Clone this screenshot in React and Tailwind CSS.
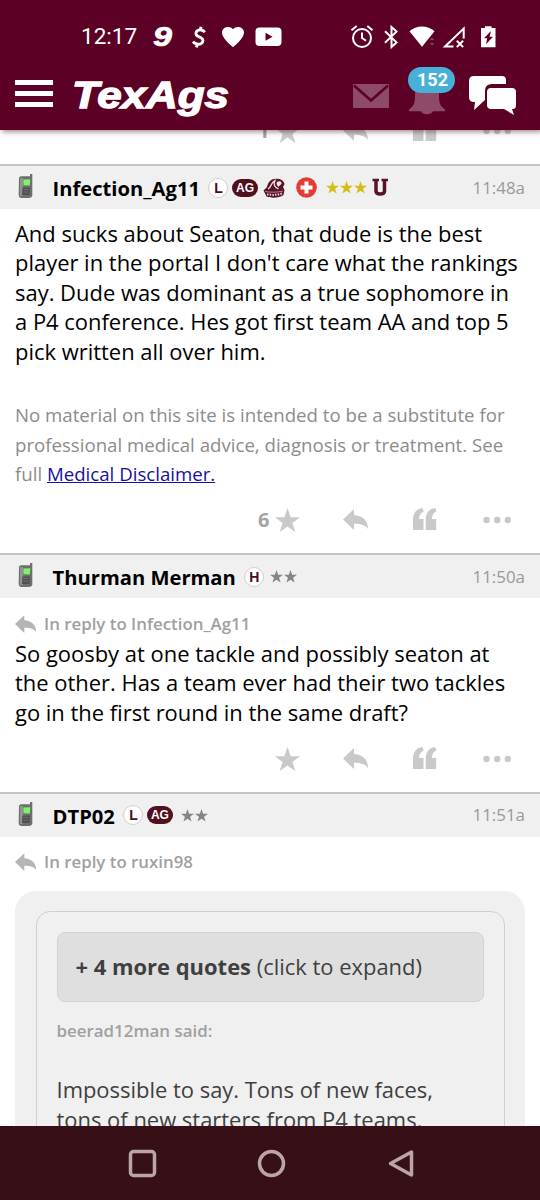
import React from "react";

function StatusBar() {
  return (
    <div className="flex h-[72px] items-center pt-[1px] text-white">
      <span className="ml-[81px] w-[72px] font-['Roboto',sans-serif] text-[22.5px] leading-none">12:17</span>
      <svg className="w-[21px] shrink-0" height="28" viewBox="0 0 21 28">
        <text x="0" y="23" textLength="19" lengthAdjust="spacingAndGlyphs" fontFamily="Liberation Sans, sans-serif" fontSize="27" fontWeight="700" fontStyle="italic" fill="#fff" stroke="#fff" strokeWidth=".7">9</text>
      </svg>
      <svg className="ml-[17px] w-[17px] shrink-0" height="24" viewBox="0 0 17 24" fill="none" stroke="#fff" strokeWidth="2.9">
        <path d="M13.7 7.2C12.2 4.9 8.8 4.2 6.6 5.5S4.4 9.9 6.5 11l3.5 1.7c2.6 1.3 2.5 4.5.2 5.800-2.700 1.500-6.600.4-8.200-1.900M10 1.700 9.400 5M6.200 19l-.7 3.400" />
      </svg>
      <svg className="ml-[13px] w-[24px] shrink-0" height="22" viewBox="0 0 24 22"><path fill="#fff" d="M12 21.3C8 17.8 1 11.6 1 6.5 1 .8 8.8-1 12 3.2 15.2-1 23 .8 23 6.5c0 5.1-7 11.3-11 14.8Z" /></svg>
      <svg className="ml-[10px] w-[27px] shrink-0" height="20" viewBox="0 0 27 20"><rect x=".5" y=".5" width="26" height="18.5" rx="4" fill="#fff" /><path d="M10.5 5.8v8l7-4z" fill="#5c0025" /></svg>
      <svg className="ml-[68px] w-[24px] shrink-0" height="26" viewBox="0 0 24 26" fill="none" stroke="#fff" strokeWidth="2"><circle cx="12" cy="14" r="9" /><path d="M12 8.5V14l4 2.8M1.5 6.2l5.2-4.3M17.3 1.9l5.2 4.3" /></svg>
      <svg className="ml-[10px] w-[15px] shrink-0" height="24" viewBox="0 0 15 24" fill="none" stroke="#fff" strokeWidth="2"><path d="m1 6.2 11.5 11.2-5 4.6V2l5 4.6L1 17.8" /></svg>
      <svg className="ml-[10px] w-[27px] shrink-0" height="24" viewBox="0 0 27 24"><path fill="#fff" d="M.5 6.2C7.2-.2 18.8-.2 25.5 6.2L13 21.7Z" /><path fill="#8e4b69" d="m23 12.5 2 2.500h-4zm0 8-2-2.500h4z" /></svg>
      <svg className="ml-[6px] w-[24px] shrink-0" height="24" viewBox="0 0 24 24" fill="none" stroke="#fff" strokeWidth="2"><path d="M11.5 21.600H3L21.7 3.500v10M14.8 15.800l6.3 6.3m0-6.3-6.3 6.3" /></svg>
      <svg className="ml-[14px] w-[17px] shrink-0" height="24" viewBox="0 0 17 24"><path fill="#fff" d="M5 3V1.2h6.5V3h4v19.3H1V3Z" /><path fill="#5c0025" d="M11 6 4 13.2h3.2L6 19.2l7-7.4H9.6z" /></svg>
    </div>
  );
}

function TopBar() {
  return (
    <header className="relative z-10 h-[130px] shrink-0 bg-[#5c0025] shadow-[2px_2px_5px_rgba(60,0,25,0.45)]">
      <StatusBar />
      <div className="flex h-[46px] items-center">
        <div className="ml-[15px] flex w-[38px] flex-col gap-[5.5px] pb-[3px]">
          <i className="h-[5.5px] bg-white" /><i className="h-[5.5px] bg-white" /><i className="h-[5.5px] bg-white" />
        </div>
        <svg className="ml-[18px] shrink-0" width="164" height="46" viewBox="0 0 164 46">
          <text x="1" y="35.500" textLength="157" lengthAdjust="spacingAndGlyphs" fontFamily="Liberation Sans, sans-serif" fontSize="36.5" fontWeight="700" fontStyle="italic" fill="#fff" stroke="#fff" strokeWidth="1.3">TexAgs</text>
        </svg>
        <svg className="ml-[118px] mt-[2px] shrink-0" width="36" height="24" viewBox="0 0 36 24"><rect width="36" height="24" rx="1" fill="#8e4b69" /><path d="M1 1.5 18 16.5 35 1.5" fill="none" stroke="#5c0025" strokeWidth="2.7" /></svg>
        <div className="relative ml-[20px] h-[46px] w-[36px] shrink-0">
          <svg width="36" height="46" viewBox="0 0 36 46"><path fill="#8e4b69" d="M18 9c8 0 12 6 12 14 0 9 1 10.5 6 14.5v1.8H24c-1.5 4-10.500 4-12 0H0v-1.800C5 33.500 6 32 6 23 6 15 10 9 18 9Z" /></svg>
          <span className="absolute left-[-1px] top-[-5px] flex h-[26px] w-[47px] items-center justify-center rounded-full bg-[#47b0d7] pb-[1px] pl-[2px] font-['Roboto',sans-serif] text-[18px] font-bold text-white">152</span>
        </div>
        <svg className="ml-[23px] shrink-0" width="50" height="42" viewBox="0 0 50 42"><path fill="#fff" d="M6 2h28q4 0 4 4v4H24q-7 0-7 7v9l-11 10 1-8H6q-5 0-5-5V7q0-5 5-5Z" /><path fill="#fff" d="M23 14h21q4 0 4 4v13q0 4-3 4h-1l2 6-10-6H23q-4 0-4-4V18q0-4 4-4Z" /></svg>
      </div>
    </header>
  );
}

function ReplyIcon({ small }) {
  return (
    <svg className="shrink-0" width={small ? 22 : 26} height={small ? 19 : 22} viewBox="0 0 26 22" fill={small ? "#b5b5b5" : "#c9c9c9"}>
      <path d="M0 10.500 11 0v6C19 6.500 25 11 25 20c-3-4-7-5.300-14-5.200V21Z" />
    </svg>
  );
}

function Star({ size, fill }) {
  return <svg className="shrink-0" width={size} height={size} viewBox="0 0 24 24" fill={fill}><path d="M12 0l3 8.800h9l-7.300 5.500L19.500 23 12 17.800 4.500 23l2.800-8.700L0 8.800h9z" /></svg>;
}

function Actions({ count, className = "" }) {
  return (
    <div className={"flex h-[60px] shrink-0 items-center " + className}>
      <span className="w-[269.5px] text-right text-[20px] font-bold text-[#a3a3a3]">{count}</span>
      <span className="ml-[5.5px] w-[68px]"><Star size={25} fill="#c9c9c9" /></span>
      <span className="w-[70px]"><ReplyIcon /></span>
      <svg className="-mt-[2px] shrink-0" width="24" height="24" viewBox="0 0 24 24" fill="#c9c9c9"><path d="M0 23V13C0 6 3 2 9.500 1l1.200 3.500C7.500 6 6.200 8.500 6.200 12h4.300v11zM12.700 23V13c0-7 3-11 9.500-12l1.200 3.500C20.200 6 18.900 8.500 18.900 12h4.300v11z" /></svg>
      <svg className="ml-[46px] shrink-0" width="30" height="8" viewBox="0 0 30 8" fill="#c9c9c9"><circle cx="3.500" cy="4" r="3.200" /><circle cx="14.200" cy="4" r="3.200" /><circle cx="24.800" cy="4" r="3.200" /></svg>
    </div>
  );
}

function Phone() {
  return (
    <svg className="-mt-[2px] ml-[18px] shrink-0" width="16" height="25" viewBox="0 0 16 25">
      <path d="M12 0h2.300v22q-1 2-3.300 2H3q-2.500-.5-2.300-3L1 4q.3-1.700 2-1.800h9z" fill="#6e6e6e" />
      <path d="M2 4h3v18H2z" fill="#929292" />
      <path d="m5.300 5.500 7-.3-.5 6.300-6.300-.3z" fill="#7df568" />
      <path d="M4.500 13.500h7.500l-.5 7.500H4z" fill="#505050" />
      <path d="M5.500 15.500h5m-5 2.500h5" stroke="#6f6f6f" />
    </svg>
  );
}

function Letter({ children }) {
  return <span className="flex size-[20px] shrink-0 items-center justify-center rounded-full border border-[#cfcfcf] bg-white font-['Liberation_Sans',sans-serif] text-[14px] font-bold leading-none text-[#4d0c1c]">{children}</span>;
}

function Aggie() {
  return <span className="ml-[3.5px] flex h-[18px] w-[26px] shrink-0 items-center justify-center rounded-full bg-[#520f20] font-['Liberation_Sans',sans-serif] text-[12px] font-bold leading-none text-white">AG</span>;
}

function Ring() {
  return (
    <svg className="ml-[5.5px] shrink-0" width="22" height="20" viewBox="0 0 22 20">
      <path d="M.5 12.500 4 9C5 4 8 .8 13 .8c5 0 8 2 8.500 5.500L20 9l1.500 3-1 5c-4 3-12 3.500-17 1.500Z" fill="#5a1225" />
      <path d="M5 11C9 9 7 5 12 2.500c-2 4-.5 6.500 3.500 8.500" fill="none" stroke="#f1e8eb" strokeWidth="1.300" />
      <path d="M14 4c2-1.500 5-.5 4.500 1.500C18 7.500 16 7 15.500 9 14 7.500 13 5.500 14 4Z" fill="#f1e8eb" />
      <path d="M2 13.500c6 1 12 1 18-.5" fill="none" stroke="#e3d3d8" strokeWidth=".6" />
      <path d="M4 16.300c5 1 10 .8 15-.8" fill="none" stroke="#e3d3d8" strokeWidth="2" strokeDasharray="1.500 1.200" />
    </svg>
  );
}

function Stars({ count, fill, className }) {
  return <span className={"flex shrink-0 gap-[1px] " + className}>{Array.from({ length: count }, (_, i) => <Star key={i} size={13} fill={fill} />)}</span>;
}

function PostHeader({ name, time, children }) {
  return (
    <div className="flex h-[45px] shrink-0 items-center border-t-2 border-[#c3c3c3] bg-[#f0f0f0]">
      <Phone />
      <strong className="ml-[18.500px] shrink-0 whitespace-nowrap pt-[2px] text-[20.200px] font-bold leading-none text-black">{name}</strong>
      {children}
      <time className="ml-auto mr-[15px] text-[16.900px] text-[#999]">{time}</time>
    </div>
  );
}

function ReplyTo({ children }) {
  return <div className="flex items-center gap-[7px] pl-[15px] text-[16.850px] font-semibold leading-[20px] text-[#a0a0a0]"><ReplyIcon small />{children}</div>;
}

function Lines({ lines, className = "" }) {
  return <div className={"whitespace-nowrap leading-[29.600px] " + className}>{lines.map((line, i) => <div key={i}>{line}</div>)}</div>;
}

function NavBar() {
  return (
    <nav className="z-10 flex h-[74px] shrink-0 items-center bg-[#360f17]">
      <svg className="ml-[128px]" width="29" height="29" viewBox="0 0 29 29" fill="none" stroke="#bba4aa" strokeWidth="3.500"><rect x="2.500" y="2.500" width="24" height="24" rx="3" /></svg>
      <svg className="ml-[100px]" width="29" height="29" viewBox="0 0 29 29" fill="none" stroke="#bba4aa" strokeWidth="3.500"><circle cx="14.500" cy="14.500" r="12" /></svg>
      <svg className="ml-[102px]" width="28" height="29" viewBox="0 0 28 29" fill="none" stroke="#bba4aa" strokeWidth="3.500" strokeLinejoin="round"><path d="M23.500 3v23L2.500 14.500z" /></svg>
    </nav>
  );
}

export default function App() {
  return (
    <div className="flex h-[1200px] w-[540px] flex-col overflow-hidden bg-white font-['Open_Sans','Noto_Sans',sans-serif]">
      <TopBar />
      <main className="flex min-h-0 flex-1 flex-col overflow-hidden">
        <Actions count="1" className="-mt-[29px] mb-[3px]" />
        <article className="flex h-[389px] shrink-0 flex-col">
          <PostHeader name="Infection_Ag11" time="11:48a">
            <span className="ml-[8.5px]"><Letter>L</Letter></span>
            <Aggie />
            <Ring />
            <svg className="ml-[11px] shrink-0" width="21" height="21" viewBox="0 0 21 21"><circle cx="10.500" cy="10.500" r="10.300" fill="#e23c35" /><path d="M10.500 4.500v12m-6-6h12" stroke="#fff" strokeWidth="4" /></svg>
            <Stars count={3} fill="#d3bd17" className="ml-[8.5px]" />
            <svg className="ml-[5px] shrink-0" width="17" height="19" viewBox="0 0 17 19" fill="none" stroke="#5a1225"><path d="M.5 2h6.500M9.500 2H16" strokeWidth="2.500" /><path d="M4 2v11q0 3 4.250 3t4.250-3V2" strokeWidth="3.500" /></svg>
          </PostHeader>
          <Lines className="ml-[15px] mt-[9.5px] text-[21.950px] text-black" lines={["And sucks about Seaton, that dude is the best", "player in the portal I don't care what the rankings", "say. Dude was dominant as a true sophomore in", "a P4 conference. Hes got first team AA and top 5", "pick written all over him."]} />
          <Lines className="ml-[15px] mt-[33.800px] text-[18.650px] text-[#8c8c8c]" lines={["No material on this site is intended to be a substitute for", "professional medical advice, diagnosis or treatment. See", <>full <a href="#" className="text-[#1510a0] underline">Medical Disclaimer.</a></>]} />
          <Actions count="6" className="mb-[3px] mt-auto" />
        </article>
        <article className="flex h-[239px] shrink-0 flex-col">
          <PostHeader name="Thurman Merman" time="11:50a">
            <span className="ml-[8.5px]"><Letter>H</Letter></span>
            <Stars count={2} fill="#858585" className="ml-[6px]" />
          </PostHeader>
          <div className="pt-[16px]"><ReplyTo>In reply to Infection_Ag11</ReplyTo></div>
          <Lines className="ml-[15px] mt-[4.700px] text-[21.950px] text-black" lines={["So goosby at one tackle and possibly seaton at", "the other. Has a team ever had their two tackles", "go in the first round in the same draft?"]} />
          <Actions className="mb-[3px] mt-auto" />
        </article>
        <article className="-mt-[0.5px] shrink-0">
          <PostHeader name="DTP02" time="11:51a">
            <span className="ml-[8.5px]"><Letter>L</Letter></span>
            <Aggie />
            <Stars count={2} fill="#858585" className="ml-[8px]" />
          </PostHeader>
          <div className="pt-[15.5px]"><ReplyTo>In reply to ruxin98</ReplyTo></div>
          <blockquote className="mx-[15px] mt-[19px] h-[400px] rounded-[21px] bg-[#f0f0f0] px-[20.500px] pt-[20px] text-[#3f3f3f]">
            <div className="h-[400px] rounded-[14px] border-[1.500px] border-[#d0d0d0] px-[20px] pt-[20px]">
              <div className="flex h-[70px] items-center whitespace-pre rounded-[8px] border-[1.500px] border-[#d2d2d2] bg-[#dfdfdf] pl-[18px] text-[21.950px]"><b>+ 4 more quotes</b> (click to expand)</div>
              <div className="mt-[19px] text-[16.900px] font-semibold leading-[20px] text-[#a0a0a0]">beerad12man said:</div>
              <Lines className="mt-[34px] text-[21.950px]" lines={["Impossible to say. Tons of new faces,", "tons of new starters from P4 teams."]} />
            </div>
          </blockquote>
        </article>
      </main>
      <NavBar />
    </div>
  );
}
